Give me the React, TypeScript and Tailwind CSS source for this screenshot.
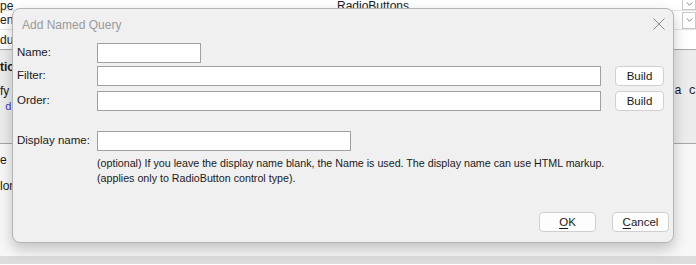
function Field({ label, width, build, className }: { label: string; width: string; build?: boolean; className?: string }) {
  return (
    <div className={`flex items-start ${className ?? ''}`}>
      <div className="w-[84px] pl-[4px] pt-[2px] leading-[14px]">{label}</div>
      <div className={`h-[20px] ${width} border border-[#a0a0a0] bg-white`} />
      {build && (
        <button className="ml-[14px] h-[20px] w-[49px] rounded-[4px] border border-[#d0d0d0] bg-[#fdfdfd] text-[11.5px] leading-[18px] text-[#1a1a1a]">
          Build
        </button>
      )}
    </div>
  )
}

function DialogButton({ label }: { label: string }) {
  return (
    <button className="h-[20px] w-[57px] rounded-[4px] border border-[#d0d0d0] bg-[#fdfdfd] text-[11.5px] leading-[18px] text-[#1a1a1a]">
      <span className="underline decoration-[#1a1a1a] underline-offset-2">{label[0]}</span>
      {label.slice(1)}
    </button>
  )
}

function Chevron() {
  return (
    <svg viewBox="0 0 8 5" className="h-[4px] w-[7px]" fill="none" stroke="#606060" strokeWidth="1">
      <path d="M0.5 0.5 L4 4 L7.5 0.5" />
    </svg>
  )
}

export default function App() {
  return (
    <div className="relative h-[265px] w-[696px] overflow-hidden bg-white font-['Liberation_Sans',Arial,sans-serif] text-[11.5px] text-[#1a1a1a]">
      {/* window behind the dialog */}
      <div className="flex h-[49px] flex-col bg-white text-[12px]">
        <div className="flex h-[11px] items-end border-b border-[#e4e4e4]">
          <span className="-mb-[2px] w-[337px] leading-[12px]">pe</span>
          <span className="-mb-[2px] flex-1 leading-[12px]">RadioButtons</span>
          <div className="flex h-[11px] w-[14px] items-center justify-center border border-t-0 border-[#c8c8c8]">
            <Chevron />
          </div>
        </div>
        <div className="flex h-[19px] items-center border-b border-[#e4e4e4]">
          <span className="flex-1">en</span>
          <div className="flex h-[17px] w-[14px] items-center justify-center border border-[#c8c8c8]">
            <Chevron />
          </div>
        </div>
        <div className="flex h-[19px] items-center">
          <span>duc</span>
        </div>
      </div>
      <div className="flex h-[95px] flex-col border-y border-[#a8a8a8] bg-[#ececec] text-[12px]">
        <span className="mt-[8px] font-bold">tio</span>
        <div className="mt-[6px] flex justify-between">
          <span>fy</span>
          <span className="font-['Liberation_Mono',monospace]">y a c</span>
        </div>
        <span className="-mt-[1px] pl-[5px] font-['Liberation_Mono',monospace] text-[11px] text-[#3a3ad0]">d.</span>
      </div>
      <div className="flex h-[112px] flex-col bg-[#f7f7f7] text-[12px]">
        <span className="mt-[7px]">e</span>
        <span className="mt-[8px]">lor</span>
      </div>
      <div className="h-[8px] bg-[#dcdcdc]" />

      {/* Add Named Query dialog */}
      <div className="absolute left-[12px] top-[8px] flex h-[235px] w-[662px] flex-col rounded-[8px] border border-[#b4b4b4] bg-[#f0f0f0] shadow-[0_6px_14px_rgba(0,0,0,0.22)]">
        <div className="flex h-[34px] items-start justify-between">
          <span className="pl-[9px] pt-[7px] text-[12px] text-[#9a9a9a]">Add Named Query</span>
          <svg viewBox="0 0 12 12" className="mr-[8px] mt-[9px] h-[12px] w-[12px]" fill="none" stroke="#8a8a8a" strokeWidth="1">
            <path d="M0.5 0.5 L11.5 11.5 M11.5 0.5 L0.5 11.5" />
          </svg>
        </div>
        <Field label="Name:" width="w-[104px]" />
        <Field label="Filter:" width="w-[504px]" build className="mt-[3px]" />
        <Field label="Order:" width="w-[504px]" build className="mt-[5px]" />
        <Field label="Display name:" width="w-[254px]" className="mt-[20px]" />
        <div className="mt-[5px] pl-[84px] text-[10.7px] leading-[15px]">
          <p>(optional) If you leave the display name blank, the Name is used. The display name can use HTML markup.</p>
          <p>(applies only to RadioButton control type).</p>
        </div>
        <div className="mt-auto mb-[10px] flex justify-end gap-[16px] pr-[4px]">
          <DialogButton label="OK" />
          <DialogButton label="Cancel" />
        </div>
      </div>
    </div>
  )
}
